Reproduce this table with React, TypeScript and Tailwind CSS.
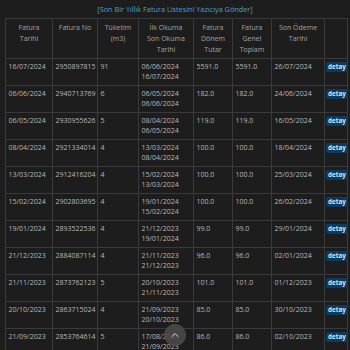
import { ChevronUp } from 'lucide-react'

type Fatura = {
  tarih: string
  no: string
  tuketim: string
  ilk: string
  son: string
  tutar: string
  toplam: string
  odeme: string
}

const rows: Fatura[] = [
  { tarih: '16/07/2024', no: '2950897815', tuketim: '91', ilk: '06/06/2024', son: '16/07/2024', tutar: '5591.0', toplam: '5591.0', odeme: '26/07/2024' },
  { tarih: '06/06/2024', no: '2940713769', tuketim: '6', ilk: '06/05/2024', son: '06/06/2024', tutar: '182.0', toplam: '182.0', odeme: '24/06/2024' },
  { tarih: '06/05/2024', no: '2930955626', tuketim: '5', ilk: '08/04/2024', son: '06/05/2024', tutar: '119.0', toplam: '119.0', odeme: '16/05/2024' },
  { tarih: '08/04/2024', no: '2921334014', tuketim: '4', ilk: '13/03/2024', son: '08/04/2024', tutar: '100.0', toplam: '100.0', odeme: '18/04/2024' },
  { tarih: '13/03/2024', no: '2912416204', tuketim: '4', ilk: '15/02/2024', son: '13/03/2024', tutar: '100.0', toplam: '100.0', odeme: '25/03/2024' },
  { tarih: '15/02/2024', no: '2902803695', tuketim: '4', ilk: '19/01/2024', son: '15/02/2024', tutar: '100.0', toplam: '100.0', odeme: '26/02/2024' },
  { tarih: '19/01/2024', no: '2893522536', tuketim: '4', ilk: '21/12/2023', son: '19/01/2024', tutar: '99.0', toplam: '99.0', odeme: '29/01/2024' },
  { tarih: '21/12/2023', no: '2884087114', tuketim: '4', ilk: '21/11/2023', son: '21/12/2023', tutar: '96.0', toplam: '96.0', odeme: '02/01/2024' },
  { tarih: '21/11/2023', no: '2873762123', tuketim: '5', ilk: '20/10/2023', son: '21/11/2023', tutar: '101.0', toplam: '101.0', odeme: '01/12/2023' },
  { tarih: '20/10/2023', no: '2863715024', tuketim: '4', ilk: '21/09/2023', son: '20/10/2023', tutar: '85.0', toplam: '85.0', odeme: '30/10/2023' },
  { tarih: '21/09/2023', no: '2853764614', tuketim: '5', ilk: '17/08/2023', son: '21/09/2023', tutar: '86.0', toplam: '86.0', odeme: '02/10/2023' },
]

const th = 'border border-[#3a3a3a] px-[2px] py-[3px] align-top text-center font-normal text-[#a3a3a3] leading-[11px]'
const td = 'border border-[#3a3a3a] px-[2.5px] py-[2.5px] align-top text-[#b8b8b8] leading-[10.5px]'

export default function App() {
  return (
    <div className="min-h-screen bg-[#1d1d1d] text-[7px] font-['Open_Sans',sans-serif]">
      {/* Title */}
      <div className="h-[18px] flex items-center justify-center">
        <a href="#" className="text-[#4aa0cc] text-[7.3px]">
          [Son Bir Yıllık Fatura Listesini Yazıcıya Gönder]
        </a>
      </div>

      <table className="ml-[5px] w-[342px] table-fixed border-collapse">
        <colgroup>
          <col className="w-[47px]" />
          <col className="w-[45px]" />
          <col className="w-[41px]" />
          <col className="w-[55px]" />
          <col className="w-[39px]" />
          <col className="w-[39px]" />
          <col className="w-[53px]" />
          <col className="w-[23px]" />
        </colgroup>
        <thead>
          <tr>
            <th className={th}>Fatura<br />Tarihi</th>
            <th className={th}>Fatura No</th>
            <th className={th}>Tüketim<br />(m3)</th>
            <th className={th}>İlk Okuma<br />Son Okuma<br />Tarihi</th>
            <th className={th}>Fatura<br />Dönem<br />Tutar</th>
            <th className={th}>Fatura<br />Genel<br />Toplam</th>
            <th className={th}>Son Ödeme<br />Tarihi</th>
            <th className={th}></th>
          </tr>
        </thead>
        <tbody>
          {rows.map((r) => (
            <tr key={r.no}>
              <td className={td}>{r.tarih}</td>
              <td className={td}>{r.no}</td>
              <td className={td}>{r.tuketim}</td>
              <td className={td}>{r.ilk}<br />{r.son}</td>
              <td className={td}>{r.tutar}</td>
              <td className={td}>{r.toplam}</td>
              <td className={td}>{r.odeme}</td>
              <td className="border border-[#3a3a3a] px-[1px] py-[3px] align-top text-center">
                <span className="inline-block rounded-[2px] bg-[#0f3a5c] px-[2px] text-[6.3px] font-bold leading-[10px] text-[#d5e6f5]">
                  detay
                </span>
              </td>
            </tr>
          ))}
          <tr>
            <td className={td}>&nbsp;</td>
            <td className={td}></td>
            <td className={td}></td>
            <td className={td}></td>
            <td className={td}></td>
            <td className={td}></td>
            <td className={td}></td>
            <td className={td}></td>
          </tr>
        </tbody>
      </table>

      {/* Scroll to top */}
      <button className="fixed left-[164px] top-[324px] flex h-[22px] w-[22px] items-center justify-center rounded-full bg-[#4a4a4a]/90 text-white">
        <ChevronUp size={12} strokeWidth={1.5} />
      </button>
    </div>
  )
}
